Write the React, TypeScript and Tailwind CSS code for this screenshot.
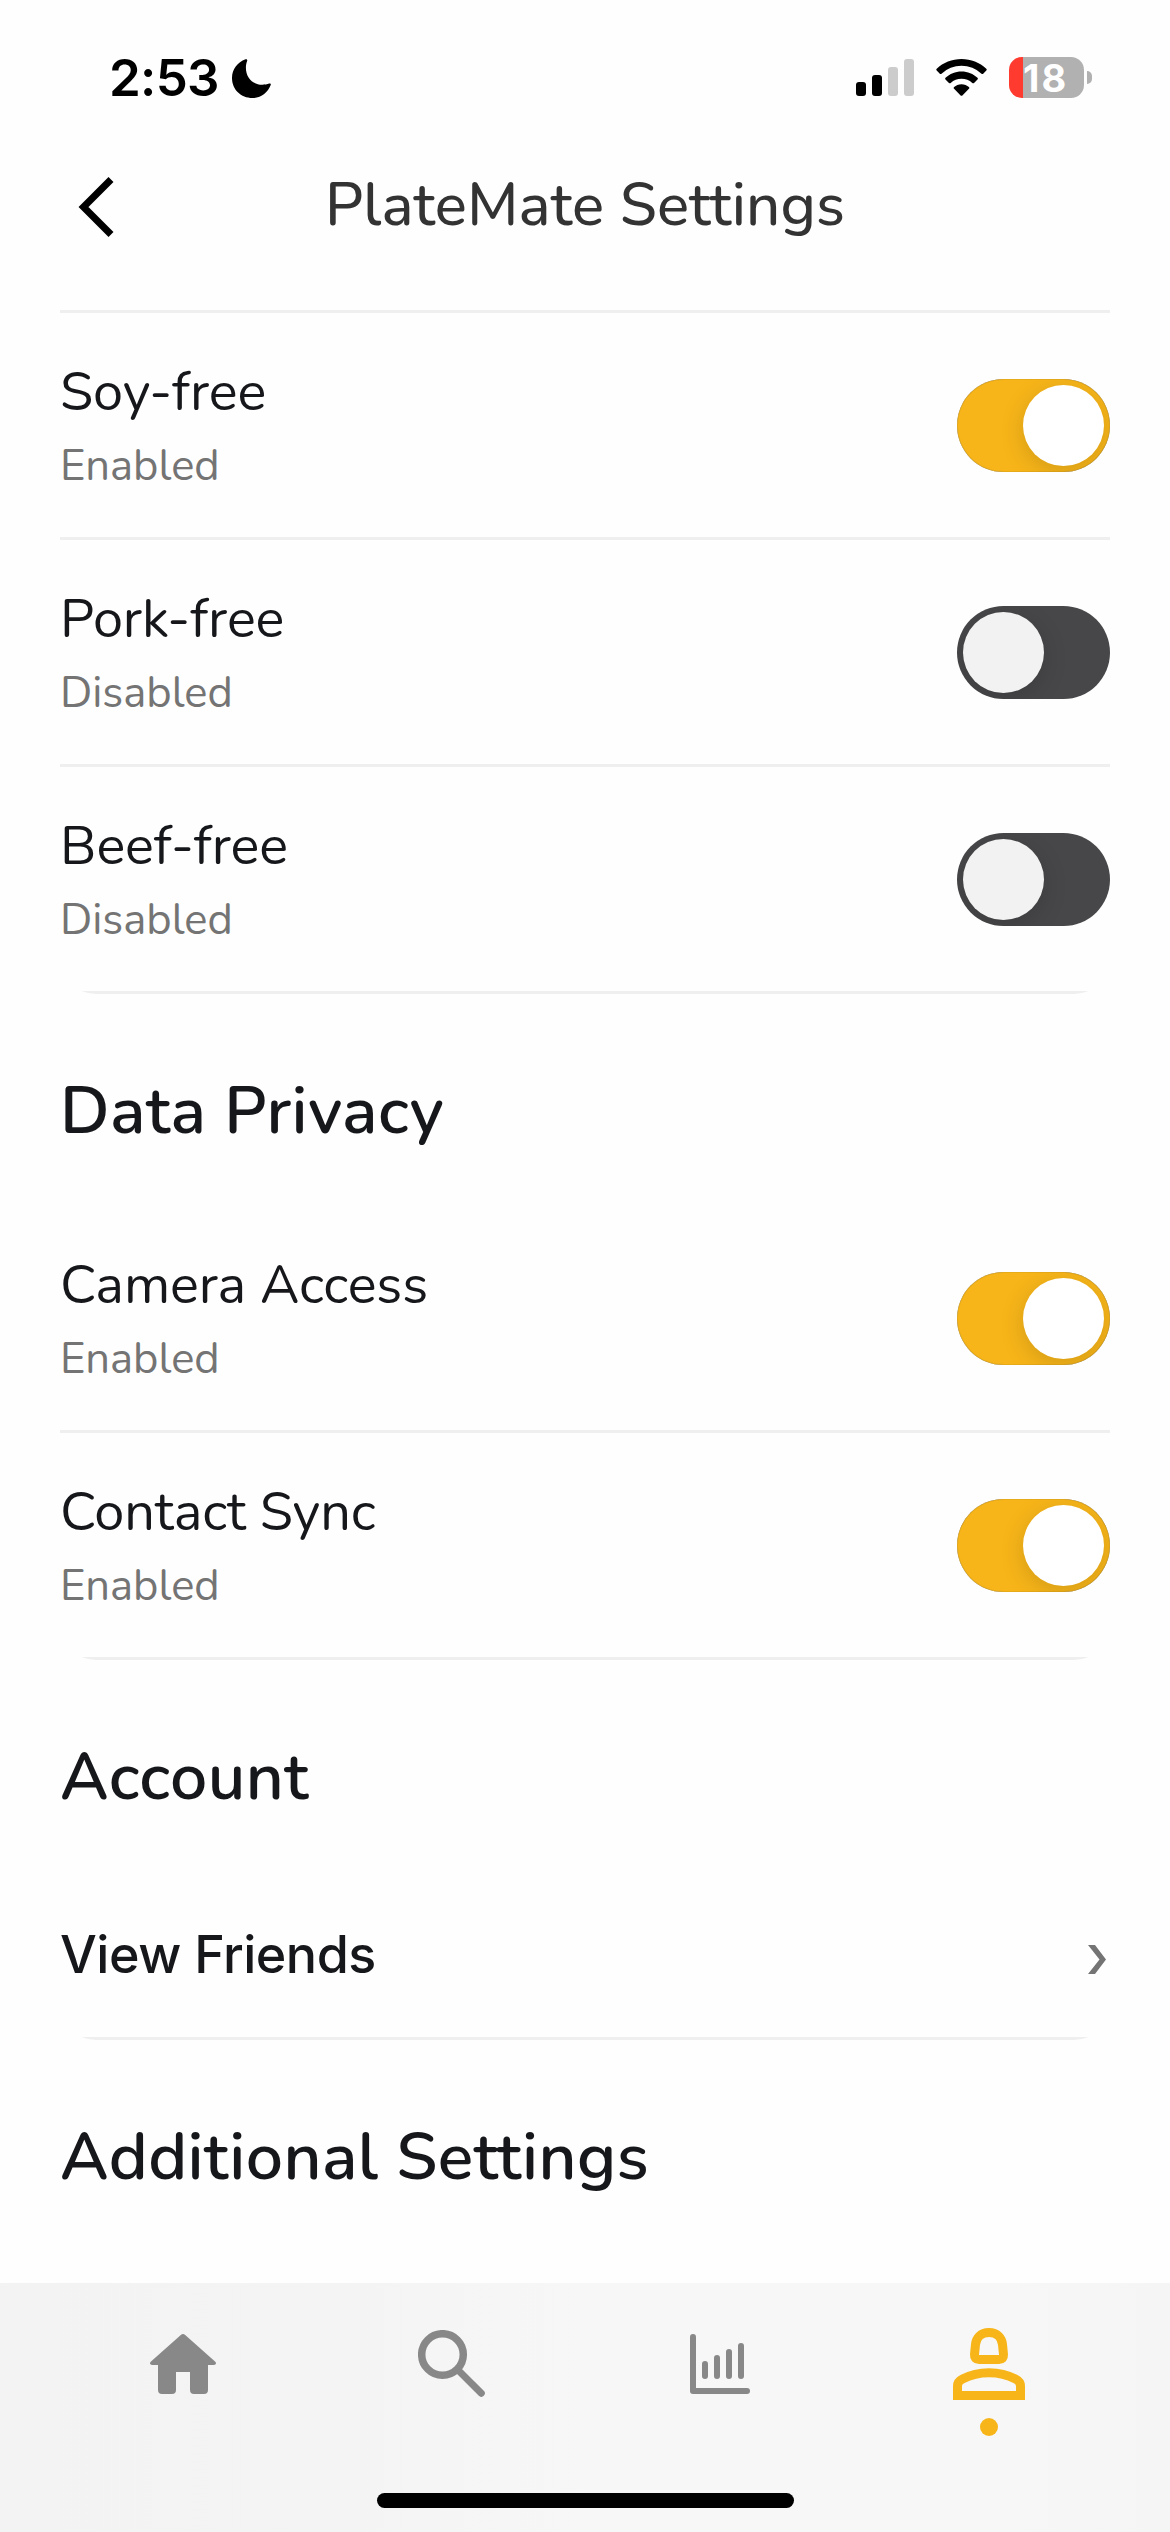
import React from "react";

const nunito = "font-['Nunito','Lato',sans-serif]";

function StatusBar() {
  return (
    <div className="flex h-[141px] items-start justify-between pl-[109px] pr-[78px] font-['Inter',sans-serif]">
      <div className="flex">
        <span className="mt-[47px] w-[123px] text-[51px] leading-[62px] font-semibold tracking-[-0.7px] text-black whitespace-nowrap">2:53</span>
        <svg className="mt-[59px] h-[39px] w-[39px]" viewBox="0 0 39 39">
          <path d="M13.5 0.3C14.6-0.1 15.6.6 15.2 1.8C14.3 4 13.9 6.300 13.900 8.800C13.900 18.500 20.500 25.700 30.200 25.700C32.800 25.700 35 25.300 37.200 24.500C38.400 24.100 39.100 24.900 38.700 26C35.800 33.700 28.800 39 20.400 39C9 39 0 30.500 0 19C0 10.500 5.500 3.300 13.500.3Z" />
        </svg>
      </div>
      <div className="flex items-start">
        <svg className="mt-[59px] h-[37px] w-[58px]" viewBox="0 0 58 37">
          <rect x="0" y="23" width="10" height="14" rx="3" />
          <rect x="16" y="16" width="10" height="21" rx="3" />
          <rect x="32" y="8" width="10" height="29" rx="3" fill="#ccc" />
          <rect x="48" y="0" width="10" height="37" rx="3" fill="#ccc" />
        </svg>
        <svg className="mt-[59px] ml-[22px] h-[37px] w-[51px]" viewBox="0 0 51 37">
          <path d="M25.500 0C35 0 43.700 3.600 50.300 9.700Q51.200 10.600 50.300 11.500L47.200 14.700Q46.400 15.400 45.500 14.700A29 29 0 0 0 5.500 14.700Q4.600 15.400 3.800 14.700L.7 11.500Q-.2 10.600.7 9.700C7.300 3.600 16 0 25.500 0Z" />
          <path d="M25.500 12.400C31.700 12.400 37.300 14.800 41.500 18.700Q42.400 19.600 41.500 20.500L38 24Q37.200 24.700 36.300 24A16 16 0 0 0 14.700 24Q13.800 24.700 13 24L9.500 20.500Q8.600 19.600 9.500 18.700C13.700 14.800 19.300 12.400 25.500 12.400Z" />
          <path d="M25.500 25.200C28.400 25.200 31 26.300 32.900 28Q33.800 28.900 32.900 29.800L26.400 36.400Q25.500 37.200 24.600 36.400L18.100 29.800Q17.200 28.900 18.100 28C20 26.300 22.600 25.200 25.500 25.200Z" />
        </svg>
        <div className="mt-[57px] ml-[22px] flex items-center">
          <div className="flex h-[41px] w-[75px] items-center rounded-[13px] bg-[linear-gradient(90deg,#ff3b30_14px,#b1b1b1_14px)]">
            <span className="ml-[14px] text-[38px] leading-[48px] font-bold tracking-[2px] text-white">18</span>
          </div>
          <div className="ml-[3px] h-[13px] w-[5px] rounded-r-full bg-[#b1b1b1]" />
        </div>
      </div>
    </div>
  );
}

function Header() {
  return (
    <header className="flex h-[169px] items-start pl-[78px]">
      <svg className="mt-[36px] h-[60px] w-[36px]" viewBox="0 0 36 60" fill="none" stroke="#000" strokeWidth="7">
        <path d="M33 2.500L5.500 30L33 57.500" />
      </svg>
      <h1 className={`ml-[211px] mt-[28px] text-[60px] leading-[72px] font-[550] tracking-[0.1px] whitespace-nowrap text-[#333] ${nunito}`}>PlateMate Settings</h1>
    </header>
  );
}

function Toggle({ on }: { on: boolean }) {
  return (
    <div className={on ? "flex h-[93px] w-[153px] justify-end overflow-hidden rounded-full bg-[#f7b519] p-[6px] shadow-[inset_0_0_1px_#5a4a20]" : "flex h-[93px] w-[153px] overflow-hidden rounded-full bg-[#474749] p-[6px]"}>
      <div className={on ? "size-[81px] rounded-full bg-white shadow-[0_6px_24px_rgba(0,0,0,0.15)]" : "size-[81px] rounded-full bg-[#f2f2f2] shadow-[0_6px_24px_rgba(0,0,0,0.15)]"} />
    </div>
  );
}

function SettingRow({ label, on }: { label: string; on: boolean }) {
  return (
    <div className="flex h-[227px] items-center justify-between border-b-[3px] border-[#efeff0]">
      <div className={`flex flex-col pt-[9px] ${nunito}`}>
        <span className="text-[54px] leading-[73px] font-[450] tracking-[-0.1px] text-[#16171b]">{label}</span>
        <span className="text-[43.5px] leading-[74px] font-[370] text-[#747474]">{on ? "Enabled" : "Disabled"}</span>
      </div>
      <Toggle on={on} />
    </div>
  );
}

function SectionTitle({ children }: { children: string }) {
  return <h2 className={`h-[212px] pt-[74px] text-[66px] leading-[86px] font-semibold tracking-[0.45px] whitespace-nowrap text-[#16171b] ${nunito}`}>{children}</h2>;
}

function Card({ children }: { children: React.ReactNode }) {
  return <div className="overflow-hidden rounded-b-[36px]">{children}</div>;
}

function TabBar() {
  return (
    <nav className="flex h-[249px] shrink-0 flex-col justify-between bg-[linear-gradient(90deg,#f3f3f3_0%,#f4f4f4_30%,#f7f7f7_50%,#f7f7f7_85%,#f5f5f5_100%)] pb-[24px]">
      <div className="grid grid-cols-4 justify-items-center pt-[45px] pr-[47px] pl-[49px]">
        <svg className="mt-[6px] h-[60px] w-[66px]" viewBox="0 0 66 60" fill="#888">
          <path d="M30.800 1Q33-.9 35.200 1L65.300 27.800Q66.500 29 65.600 30.200Q65 31 63.500 31H58V56Q58 60 54 60H44Q40 60 40 56V38H26V56Q26 60 22 60H12Q8 60 8 56V31H2.500Q1 31 .4 30.200Q-.5 29 .7 27.800Z" />
        </svg>
        <svg className="mt-[2px] h-[67px] w-[67px]" viewBox="0 0 67 67" fill="none" stroke="#888" strokeLinecap="round">
          <circle cx="24.500" cy="24.500" r="20.800" strokeWidth="7.500" />
          <path d="M40.500 40.500L63.300 63.300" strokeWidth="7" />
        </svg>
        <svg className="mt-[6px] h-[60px] w-[60px]" viewBox="0 0 60 60" fill="none" stroke="#888" strokeWidth="6" strokeLinecap="round" strokeLinejoin="round">
          <path d="M3 3V57H57M15 30V42M27 24V42M39 18V42M51 12V42" />
        </svg>
        <div className="flex flex-col items-center gap-[18px]">
          <svg className="h-[72px] w-[72px]" viewBox="0 0 72 72" fill="none" stroke="#f7b519" strokeWidth="9">
            <path d="M36 4.500C44.500 4.500 48.900 10.500 49.500 16.500L50.500 26.500Q50.800 31.500 46 31.500H26Q21.200 31.500 21.500 26.500L22.500 16.500C23.100 10.500 27.500 4.500 36 4.500Z" />
            <path d="M4.500 67.500V58Q4.500 53.500 9.500 51C25.500 42.500 46.500 42.500 62.500 51Q67.500 53.500 67.500 58V67.500Z" />
          </svg>
          <div className="size-[18px] rounded-full bg-[#f7b519]" />
        </div>
      </div>
      <div className="h-[15px] w-[417px] self-center rounded-full bg-black" />
    </nav>
  );
}

export default function App() {
  return (
    <div className="flex h-[2532px] w-[1170px] flex-col overflow-hidden bg-[#fefefe]">
      <StatusBar />
      <Header />
      <main className="flex-1 overflow-hidden px-[60px]">
        <div className="h-[3px] bg-[#efeff0]" />
        <Card>
          <SettingRow label="Soy-free" on={true} />
          <SettingRow label="Pork-free" on={false} />
          <SettingRow label="Beef-free" on={false} />
        </Card>
        <SectionTitle>Data Privacy</SectionTitle>
        <Card>
          <SettingRow label="Camera Access" on={true} />
          <SettingRow label="Contact Sync" on={true} />
        </Card>
        <SectionTitle>Account</SectionTitle>
        <Card>
          <div className="flex h-[168px] items-start justify-between border-b-[3px] border-[#efeff0]">
            <span className="mt-[51px] text-[52px] leading-[64px] font-medium tracking-[-0.5px] text-[#16171b] font-['Inter',sans-serif]">View Friends</span>
            <svg className="mt-[73px] mr-[4px] h-[29px] w-[18px]" viewBox="0 0 18 29" fill="#747474">
              <path d="M0 0H7L18 14.500L7 29H0L11.500 14.500Z" />
            </svg>
          </div>
        </Card>
        <SectionTitle>Additional Settings</SectionTitle>
      </main>
      <TabBar />
    </div>
  );
}
